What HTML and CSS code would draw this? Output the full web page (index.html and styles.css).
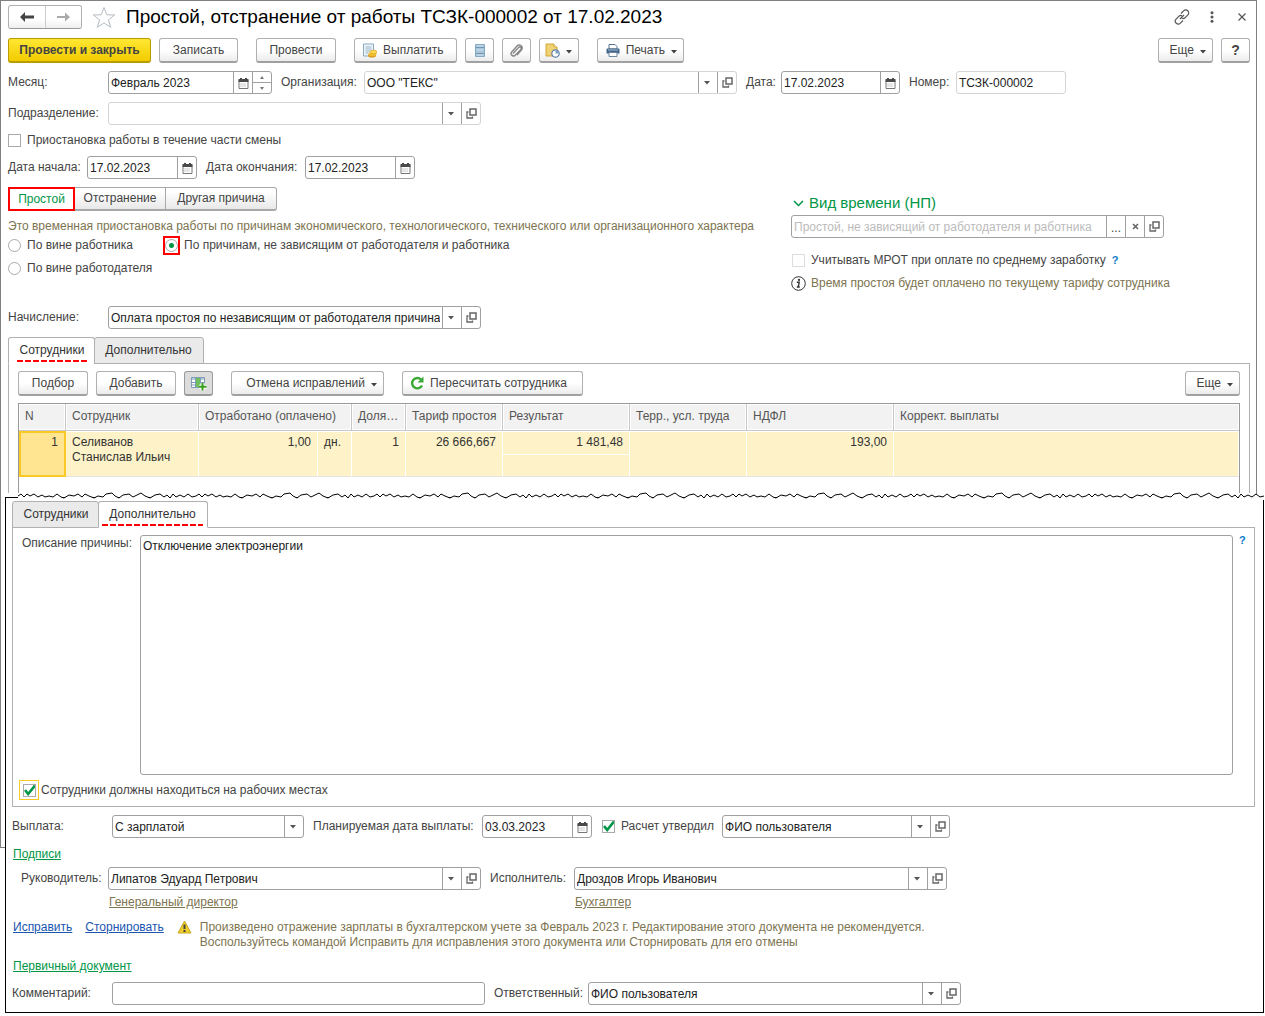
FILE: index.html
```html
<!DOCTYPE html>
<html lang="ru">
<head>
<meta charset="utf-8">
<title>Простой, отстранение от работы</title>
<link rel="stylesheet" href="styles.css">
</head>
<body>
<svg class="sprite" aria-hidden="true">
  <symbol id="calendar" viewBox="0 0 11 12"><path d="M1 3.500h9v8H1z" fill="#fff" stroke="#777"/><path d="M.5 2h10v3H.5zM2 1h2v2H2zM7 1h2v2H7z" fill="#4a4a4a"/><path d="M2.500 7h6M2.500 9h6" stroke="#999" stroke-dasharray="1 1"/></symbol>
  <symbol id="open" viewBox="0 0 11 11"><path d="M4 1h6v6H4z" fill="none" stroke="#666" stroke-width="1.500"/><path d="M2.500 4H1v6h5.500V8.500" fill="none" stroke="#666" stroke-width="1.300"/></symbol>
  <symbol id="caret" viewBox="0 0 6 4"><path d="M0 0h6L3 3.500z" fill="#444"/></symbol>
</svg>

<main class="page">
<section class="window window-main">
  <header class="titlebar">
    <div class="history">
      <button aria-label="Назад"><svg width="16" height="12" viewBox="0 0 16 12"><path d="M1 6l5-5v3.500h9v3H6V11z" fill="#444"/></svg></button>
      <button aria-label="Вперед"><svg width="16" height="12" viewBox="0 0 16 12"><path d="M15 6l-5-4.500V5H2v2h8v3.500z" fill="#aaa"/></svg></button>
    </div>
    <button class="bare star" aria-label="В избранное"><svg width="24" height="23" viewBox="0 0 24 23"><path d="M12 1.500l2.800 7.300 7.900.2-6.300 4.800 2.300 7.500L12 17l-6.700 4.300 2.300-7.500L1.300 9l7.900-.2z" fill="#fff" stroke="#b4bcc4"/></svg></button>
    <h1>Простой, отстранение от работы ТСЗК-000002 от 17.02.2023</h1>
    <div class="window-tools">
      <button class="bare" aria-label="Ссылка"><svg width="16" height="16" viewBox="0 0 16 16" fill="none" stroke="#555" stroke-width="1.200"><path d="M7 4.500l2.600-2.600a2.800 2.800 0 0 1 4.300 4L11 8.800a2.600 2.600 0 0 1-3 .4M9 11.500l-2.600 2.600a2.800 2.800 0 0 1-4.300-4L5 7.200a2.600 2.600 0 0 1 3-.4M6 10l4-4"/></svg></button>
      <button class="bare" aria-label="Меню"><svg width="4" height="12" viewBox="0 0 4 12" fill="#555"><circle cx="2" cy="1.700" r="1.500"/><circle cx="2" cy="6" r="1.500"/><circle cx="2" cy="10.300" r="1.500"/></svg></button>
      <button class="bare close" aria-label="Закрыть"><svg width="8" height="8" viewBox="0 0 8 8"><path d="M.5.500l7 7M7.500.500l-7 7" stroke="#555" stroke-width="1.200"/></svg></button>
    </div>
  </header>

  <div class="toolbar">
    <button class="btn primary">Провести и закрыть</button>
    <button class="btn w79">Записать</button>
    <button class="btn w80 apart">Провести</button>
    <button class="btn w103 apart pictured"><svg width="15" height="15" viewBox="0 0 15 15"><path d="M1.500 1h10v12h-10z" fill="#eef5fa" stroke="#8aa9c0"/><path d="M3.500 4h6M3.500 6h6M3.500 8h5M3.500 10h3" stroke="#9ab5c8"/><ellipse cx="10" cy="12.500" rx="4" ry="2" fill="#d89a20"/><ellipse cx="10.500" cy="11" rx="4" ry="2" fill="#f0c030"/><ellipse cx="11.500" cy="9" rx="3.400" ry="1.900" fill="#ffda50" stroke="#d09a20" stroke-width=".6"/></svg>Выплатить</button>
    <button class="btn icon" aria-label="Реестр"><svg width="10" height="13" viewBox="0 0 10 13"><path d="M.5.500h9v12h-9z" fill="#a9c6dc" stroke="#86a9c4"/><path d="M1 3.500h8M1 9.500h8" stroke="#6f95b4"/><path d="M2 2h6M2 6h6M2 11h6" stroke="#cfe0ec"/></svg></button>
    <button class="btn icon" aria-label="Файлы"><svg width="13" height="13" viewBox="0 0 13 13"><path d="M3 9.500l5.500-6a1.500 1.500 0 0 1 2.300 2L5.500 11a2.400 2.400 0 0 1-3.800-3L7 2a3 3 0 0 1 4.800 3.500L7 11" fill="none" stroke="#888" stroke-width="1.400"/></svg></button>
    <button class="btn menu w40" aria-label="Отчеты"><svg width="15" height="15" viewBox="0 0 15 15"><path d="M1 1h8l3 3v9H1z" fill="#f1d272" stroke="#cfa83c"/><path d="M9 1v3h3" fill="#fff" stroke="#cfa83c"/><circle cx="10.500" cy="10.500" r="3.700" fill="#fff" stroke="#5d7fa8" stroke-width="1.200"/><path d="M10.500 10.500V7.500a3 3 0 0 1 3 3z" fill="#7d9cc4"/></svg><svg class="caret"><use href="#caret"/></svg></button>
    <button class="btn menu w87 apart"><svg width="14" height="13" viewBox="0 0 14 13"><path d="M3 .5h6l2 2V5H3z" fill="#fff" stroke="#56708c"/><path d="M1.500 4.500h11q1 0 1 1v4h-13v-4q0-1 1-1z" fill="#41658a"/><path d="M3 8.500h8v4H3z" fill="#fff" stroke="#6b86a0"/><path d="M2 6h10" stroke="#a9c2d8"/></svg>Печать<svg class="caret"><use href="#caret"/></svg></button>
    <span class="spacer"></span>
    <button class="btn menu w55">Еще<svg class="caret"><use href="#caret"/></svg></button>
    <button class="btn icon help">?</button>
  </div>

  <form class="form">
    <div class="row">
      <label class="lead" for="month">Месяц:</label>
      <div class="field f164"><input id="month" value="Февраль 2023"><button type="button" aria-label="Выбрать месяц"><svg width="11" height="12"><use href="#calendar"/></svg></button><span class="spin"><button type="button" aria-label="Больше"><svg width="4" height="3" viewBox="0 0 4 3"><path d="M2 0l2 3H0z" fill="#777"/></svg></button><button type="button" aria-label="Меньше"><svg width="4" height="3" viewBox="0 0 4 3"><path d="M0 0h4L2 3z" fill="#777"/></svg></button></span></div>
      <label class="l83" for="org">Организация:</label>
      <div class="field soft f373"><select id="org"><option>ООО "ТЕКС"</option></select><button type="button" aria-label="Открыть"><svg width="11" height="11"><use href="#open"/></svg></button></div>
      <label class="l35" for="date">Дата:</label>
      <div class="field f119"><input id="date" value="17.02.2023"><button type="button" aria-label="Выбрать дату"><svg width="11" height="12"><use href="#calendar"/></svg></button></div>
      <label class="l47" for="number">Номер:</label>
      <div class="field soft f110"><input id="number" value="ТСЗК-000002"></div>
    </div>
    <div class="row">
      <label class="lead" for="dept">Подразделение:</label>
      <div class="field soft f373"><select id="dept"><option></option></select><button type="button" aria-label="Открыть"><svg width="11" height="11"><use href="#open"/></svg></button></div>
    </div>
    <label class="check"><input type="checkbox">Приостановка работы в течение части смены</label>
    <div class="row">
      <label class="l79" for="from">Дата начала:</label>
      <div class="field f110"><input id="from" value="17.02.2023"><button type="button" aria-label="Выбрать дату"><svg width="11" height="12"><use href="#calendar"/></svg></button></div>
      <label class="l99" for="to">Дата окончания:</label>
      <div class="field f110"><input id="to" value="17.02.2023"><button type="button" aria-label="Выбрать дату"><svg width="11" height="12"><use href="#calendar"/></svg></button></div>
    </div>

    <div class="columns">
      <div class="reason">
        <div class="segments"><button type="button" class="active">Простой</button><button type="button">Отстранение</button><button type="button">Другая причина</button></div>
        <p class="note">Это временная приостановка работы по причинам экономического, технологического, технического или организационного характера</p>
        <div class="radios">
          <label class="check"><input type="radio" name="fault">По вине работника</label>
          <label class="check"><span class="ring"><input type="radio" name="fault" checked></span>По причинам, не зависящим от работодателя и работника</label>
          <label class="check"><input type="radio" name="fault">По вине работодателя</label>
        </div>
      </div>
      <div class="timekind">
        <h2><svg width="11" height="7" viewBox="0 0 11 7"><path d="M1 1l4.500 4.500L10 1" fill="none" stroke="#009646" stroke-width="1.500"/></svg>Вид времени (НП)</h2>
        <div class="field f373"><input class="muted" aria-label="Вид времени" value="Простой, не зависящий от работодателя и работника"><button type="button" class="dots" aria-label="Выбрать">...</button><button type="button" aria-label="Очистить"><svg width="7" height="7" viewBox="0 0 7 7"><path d="M1 1l5 5M6 1L1 6" stroke="#666" stroke-width="1.600"/></svg></button><button type="button" aria-label="Открыть"><svg width="11" height="11"><use href="#open"/></svg></button></div>
        <div class="row inline"><label class="check"><input type="checkbox" disabled>Учитывать МРОТ при оплате по среднему заработку</label><a class="hint" href="#">?</a></div>
        <p class="note info"><svg width="15" height="15" viewBox="0 0 15 15"><circle cx="7.500" cy="7.500" r="6.800" fill="#fff" stroke="#333"/><path d="M5.800 6.300h2.400l-1 4.700M5.800 11h3" fill="none" stroke="#333" stroke-width="1.400"/><circle cx="8" cy="3.900" r="1.100" fill="#333"/></svg>Время простоя будет оплачено по текущему тарифу сотрудника</p>
      </div>
    </div>

    <div class="row accrual">
      <label class="lead" for="accrual">Начисление:</label>
      <div class="field f373"><select id="accrual"><option>Оплата простоя по независящим от работодателя причинам</option></select><button type="button" aria-label="Открыть"><svg width="11" height="11"><use href="#open"/></svg></button></div>
    </div>
  </form>

  <div class="tabs"><button class="active"><span>Сотрудники</span></button><button><span>Дополнительно</span></button></div>
  <div class="panel staff">
    <div class="toolbar">
      <button class="btn w70">Подбор</button>
      <button class="btn w80">Добавить</button>
      <button class="btn icon pressed" aria-label="Колонки"><svg width="16" height="15" viewBox="0 0 16 15"><path d="M.5 1.500h13v10H.5z" fill="#fff" stroke="#7f9db5"/><path d="M1 2h12v2H1z" fill="#b5cadb"/><path d="M5 2h4v9H5z" fill="#6fbf5a"/><path d="M4.500 2v9M9.500 2v9M1 6.500h4M1 9h4M10 6.500h3" stroke="#7f9db5"/><path d="M11.500 7v7.500M8 10.800h7.500" stroke="#fff" stroke-width="4"/><path d="M11.500 7v7.500M8 10.800h7.500" stroke="#38a01c" stroke-width="2"/></svg></button>
      <button class="btn menu w153 apart">Отмена исправлений<svg class="caret"><use href="#caret"/></svg></button>
      <button class="btn w181 apart pictured"><svg width="14" height="14" viewBox="0 0 14 14"><path d="M12 9.500a5.200 5.200 0 1 1-1-6" fill="none" stroke="#3aa935" stroke-width="2.400"/><path d="M13.500.500v6h-6z" fill="#3aa935"/></svg>Пересчитать сотрудника</button>
      <span class="spacer"></span>
      <button class="btn menu w55">Еще<svg class="caret"><use href="#caret"/></svg></button>
    </div>
    <table>
      <colgroup><col class="c-n"><col class="c-name"><col class="c-worked"><col class="c-unit"><col class="c-share"><col class="c-rate"><col class="c-result"><col class="c-terr"><col class="c-tax"><col></colgroup>
      <thead><tr><th>N</th><th>Сотрудник</th><th colspan="2">Отработано (оплачено)</th><th>Доля…</th><th>Тариф простоя</th><th>Результат</th><th>Терр., усл. труда</th><th>НДФЛ</th><th>Коррект. выплаты</th></tr></thead>
      <tbody>
        <tr><td rowspan="2" class="num current">1</td><td rowspan="2">Селиванов<br>Станислав Ильич</td><td rowspan="2" class="num">1,00</td><td rowspan="2">дн.</td><td rowspan="2" class="num">1</td><td rowspan="2" class="num">26 666,667</td><td class="num split">1 481,48</td><td rowspan="2"></td><td rowspan="2" class="num">193,00</td><td rowspan="2"></td></tr>
        <tr><td></td></tr>
      </tbody>
    </table>
  </div>
</section>

<section class="window-extra">
  <svg class="tear" height="8" aria-hidden="true">
    <defs><pattern id="torn" width="178" height="8" patternUnits="userSpaceOnUse"><path d="M0 4L3 2 6 5 9 2 12 4 16 2 20 5 24 3 27 5 31 4 35 5 39 2 43 5 46 6 51 3 56 4 60 2 64 5 67 2 71 4 76 6 80 4 85 5 88 2 94 1 97 4 101 6 105 3 111 2 115 5 119 3 123 1 127 4 132 6 137 3 142 2 146 5 149 3 152 6 155 2 158 5 162 3 166 5 170 2 174 5 178 4V8H0z" fill="#fff"/><path d="M0 4L3 2 6 5 9 2 12 4 16 2 20 5 24 3 27 5 31 4 35 5 39 2 43 5 46 6 51 3 56 4 60 2 64 5 67 2 71 4 76 6 80 4 85 5 88 2 94 1 97 4 101 6 105 3 111 2 115 5 119 3 123 1 127 4 132 6 137 3 142 2 146 5 149 3 152 6 155 2 158 5 162 3 166 5 170 2 174 5 178 4" fill="none" stroke="#000"/></pattern></defs>
    <rect width="100%" height="8" fill="url(#torn)"/>
  </svg>
  <div class="sheet">
    <div class="tabs"><button><span>Сотрудники</span></button><button class="active"><span>Дополнительно</span></button></div>
    <div class="panel details">
      <div class="describe"><label for="why">Описание причины:</label><textarea id="why">Отключение электроэнергии</textarea><a class="hint" href="#">?</a></div>
      <label class="check present"><span class="focus"><input type="checkbox" checked></span>Сотрудники должны находиться на рабочих местах</label>
    </div>
    <form class="form lower">
      <div class="row">
        <label class="lead" for="pay">Выплата:</label>
        <div class="field f192"><select id="pay"><option>С зарплатой</option></select></div>
        <label class="l169" for="paydate">Планируемая дата выплаты:</label>
        <div class="field f110"><input id="paydate" value="03.03.2023"><button type="button" aria-label="Выбрать дату"><svg width="11" height="12"><use href="#calendar"/></svg></button></div>
        <label class="check approved"><input type="checkbox" checked>Расчет утвердил</label>
        <div class="field f228"><select aria-label="Расчет утвердил"><option>ФИО пользователя</option></select><button type="button" aria-label="Открыть"><svg width="11" height="11"><use href="#open"/></svg></button></div>
      </div>
      <div class="linkline"><a class="green" href="#">Подписи</a></div>
      <div class="signers">
        <label for="head">Руководитель:</label>
        <div class="field"><select id="head"><option>Липатов Эдуард Петрович</option></select><button type="button" aria-label="Открыть"><svg width="11" height="11"><use href="#open"/></svg></button></div>
        <label for="clerk">Исполнитель:</label>
        <div class="field"><select id="clerk"><option>Дроздов Игорь Иванович</option></select><button type="button" aria-label="Открыть"><svg width="11" height="11"><use href="#open"/></svg></button></div>
        <a class="olive post-head" href="#">Генеральный директор</a>
        <a class="olive post-clerk" href="#">Бухгалтер</a>
      </div>
      <div class="warning">
        <a href="#">Исправить</a><a href="#">Сторнировать</a>
        <svg width="15" height="14" viewBox="0 0 15 14"><path d="M7.500 1L14 13H1z" fill="#efcf2c" stroke="#c9a820" stroke-linejoin="round"/><path d="M7.500 4.500V9M7.500 10v2" stroke="#444" stroke-width="2"/></svg>
        <p class="note">Произведено отражение зарплаты в бухгалтерском учете за Февраль 2023 г. Редактирование этого документа не рекомендуется.<br>Воспользуйтесь командой Исправить для исправления этого документа или Сторнировать для его отмены</p>
      </div>
      <div class="linkline"><a class="green" href="#">Первичный документ</a></div>
      <div class="row">
        <label class="lead" for="comment">Комментарий:</label>
        <div class="field f373"><input id="comment"></div>
        <label class="l93" for="owner">Ответственный:</label>
        <div class="field f373"><select id="owner"><option>ФИО пользователя</option></select><button type="button" aria-label="Открыть"><svg width="11" height="11"><use href="#open"/></svg></button></div>
      </div>
    </form>
  </div>
</section>
</main>
</body>
</html>
```
FILE: styles.css
```css
* { box-sizing: border-box; }

body {
  margin: 0;
  background: #fff;
  color: #444;
  font: 12px/15px "Liberation Sans", Arial, sans-serif;
}

button, input, select, textarea { font: inherit; color: inherit; margin: 0; }
button { padding: 0; cursor: pointer; }
h1, h2, p { margin: 0; font-weight: normal; }
svg { flex: none; display: block; }
label { white-space: nowrap; }
.sprite { position: absolute; width: 0; height: 0; }

/* Main document window; the lower sheet covers its bottom part */
.window-main {
  margin-right: 8px;
  padding: 4px 6px 354px 7px;
  border: 1px solid #808080;
}

.titlebar { display: flex; align-items: center; height: 24px; }
.history { display: flex; width: 74px; height: 24px; border: 1px solid #b0b0b0; border-bottom-color: #999; border-radius: 3px; }
.history button { flex: 1; display: grid; place-items: center; border: 0; background: linear-gradient(#fff 60%, #eee); border-radius: 3px; }
.history button + button { border-left: 1px solid #ccc; border-radius: 0 3px 3px 0; }
.bare { border: 0; background: none; }
.star { margin: 0 10px; }
h1 { color: #000; font-size: 19px; line-height: 24px; white-space: nowrap; }
.window-tools { display: flex; align-items: center; gap: 20px; margin-left: auto; padding-right: 4px; }
.close { margin-left: 4px; }

.toolbar { display: flex; gap: 8px; }
.titlebar + .toolbar { margin-top: 9px; }
.spacer { flex: 1; }
.btn {
  display: flex; align-items: center; justify-content: center; gap: 6px;
  height: 25px;
  border: 1px solid #b0b0b0; border-bottom: 2px solid #a0a0a0; border-radius: 3px;
  background: linear-gradient(#fff 50%, #ececec);
  white-space: nowrap;
}
.pictured { justify-content: flex-start; padding-left: 7px; }
.menu { justify-content: flex-end; padding-right: 6px; }
.primary { width: 143px; border-color: #b89c00; background: linear-gradient(#ffe733, #f2cc00); font-weight: bold; }
.icon { width: 29px; }
.help { font-weight: bold; font-size: 14px; }
.pressed { background: #dcdcdc; border-color: #999; }
.apart { margin-left: 10px; }
.caret { width: 6px; height: 4px; margin-top: 3px; }
.w40 { width: 40px; } .w55 { width: 55px; } .w70 { width: 70px; } .w79 { width: 79px; }
.w80 { width: 80px; } .w87 { width: 87px; } .w103 { width: 103px; } .w153 { width: 153px; } .w181 { width: 181px; }

.form { display: flex; flex-direction: column; gap: 8px; margin-top: 8px; }
.row { display: flex; align-items: center; }
.lead { width: 100px; }
.l35, .l47, .l79, .l83, .l93, .l99, .l169 { margin-left: 9px; }
.l35 { width: 35px; } .l47 { width: 47px; } .l83 { width: 83px; }
.l79 { width: 79px; margin-left: 0; } .l93 { width: 94px; } .l99 { width: 99px; } .l169 { width: 169px; }

.field {
  display: flex; height: 23px; overflow: hidden;
  border: 1px solid #a0a0a0; border-radius: 3px;
  background: #fff;
}
.soft { border-color: #d4d4d4; }
.field input, .field select { flex: 1; min-width: 0; width: 0; border: 0; outline: 0; padding: 1px 2px 0; background: none; color: #222; }
.field .muted { color: #bbb; }
.field select {
  appearance: none;
  padding-right: 21px;
  background:
    url("data:image/svg+xml,%3Csvg xmlns='http://www.w3.org/2000/svg' width='6' height='4'%3E%3Cpath d='M0 0h6L3 3.500z' fill='%23555'/%3E%3C/svg%3E") no-repeat right 7px center,
    linear-gradient(#a0a0a0, #a0a0a0) no-repeat right 18px top / 1px 100%;
}
.field > button { width: 19px; display: grid; place-items: center; border: 0; border-left: 1px solid #a0a0a0; background: none; }
.field .dots { padding-top: 3px; }
.spin { display: flex; flex-direction: column; width: 19px; border-left: 1px solid #a0a0a0; }
.spin button { flex: 1; display: grid; place-items: center; border: 0; background: none; }
.spin button + button { border-top: 1px solid #a0a0a0; }
.f110 { width: 110px; } .f119 { width: 119px; } .f164 { width: 164px; }
.f192 { width: 192px; } .f228 { width: 228px; } .f373 { width: 373px; }

.check { display: flex; align-items: center; gap: 6px; height: 15px; }
.check input { appearance: none; flex: none; width: 13px; height: 13px; border: 1px solid #aaa; background: #fff; }
.check input[type="radio"] { display: block; border-radius: 50%; }
.check input[type="radio"]:checked { background: radial-gradient(circle, #009646 2px, #fff 3px); }
.check input:disabled { border-color: #ddd; }
.check input[type="checkbox"]:checked {
  background: url("data:image/svg+xml,%3Csvg xmlns='http://www.w3.org/2000/svg' width='12' height='11'%3E%3Cpath d='M1.500 5l3 4L11 .5' fill='none' stroke='%23009646' stroke-width='2.500'/%3E%3C/svg%3E") no-repeat center;
}
.ring { flex: none; margin: -2px -2px -2px -3px; padding: 1px 0; border: 2px solid #f00; }

.columns { display: grid; grid-template-columns: 783px 1fr; }
.segments { display: flex; height: 24px; width: 269px; }
.segments button { flex: none; width: 91px; border: 1px solid #a8a8a8; border-left: 0; border-bottom-width: 2px; background: linear-gradient(#fff 20%, #e8e8e8); white-space: nowrap; }
.segments .active { width: 67px; border: 2px solid #f00; background: #fff; color: #009646; }
.segments button:last-child { width: 111px; border-radius: 0 3px 3px 0; }
.note { color: #7d7450; white-space: nowrap; }
.segments + .note { margin-top: 8px; }
.radios { display: grid; grid-template-columns: 158px 1fr; gap: 8px 0; margin-top: 4px; }

h2 { display: flex; align-items: center; gap: 5px; height: 28px; padding: 4px 0 0 2px; color: #009646; font-size: 15px; line-height: 20px; }
.inline { margin: 15px 0 8px; gap: 6px; }
.inline .check { padding-left: 1px; }
.hint { color: #0a7ac8; font-size: 11px; font-weight: bold; text-decoration: none; }
.info { display: flex; align-items: center; gap: 5px; }
.accrual { margin-top: 7px; }

.tabs { position: relative; z-index: 1; display: flex; height: 27px; margin-top: 8px; }
.tabs button { width: 87px; padding: 0; border: 1px solid #b0b0b0; border-radius: 3px 3px 0 0; background: #eaeaea; color: #333; white-space: nowrap; }
.tabs button + button { width: 110px; margin-left: -1px; }
.tabs .active { background: #fff; border-bottom-color: #fff; }
.tabs span { display: block; height: 23px; padding-top: 4px; margin: 0 4px 0 3px; }
.tabs button:first-child span { margin: 0 7px 0 8px; }
.tabs .active span { background: repeating-linear-gradient(90deg, #f00 0 6px, transparent 6px 8px) no-repeat bottom / 100% 2px; }
.panel { border: 1px solid #b0b0b0; margin-top: -1px; }
.staff { padding: 7px 9px 0; border-bottom: 0; }

table { width: 100%; margin-top: 7px; border: 1px solid #999; border-bottom: 0; border-spacing: 0; table-layout: fixed; }
th, td { padding: 4px 6px; text-align: left; vertical-align: top; white-space: nowrap; overflow: hidden; border-right: 1px solid #fff; color: #333; }
th { height: 27px; padding-top: 5px; background: #f2f2f2; border-right-color: #c8c8c8; border-bottom: 1px solid #c8c8cc; box-shadow: inset 0 0 0 1px #fff; color: #555; font-weight: normal; }
td { height: 23px; padding-top: 3px; background: #fdf2c8; border-top: 1px solid #fff; border-bottom: 1px solid #e4e4e4; }
.split { border-bottom: 0; }
th:last-child { border-right: 0; }
.num { text-align: right; }
.current { background: #ffe591; border: 2px solid #fbc926; padding-top: 2px; }
.c-n { width: 47px; } .c-name { width: 133px; } .c-worked { width: 119px; } .c-unit { width: 34px; } .c-share { width: 54px; }
.c-rate { width: 97px; } .c-result { width: 127px; } .c-terr { width: 117px; } .c-tax { width: 147px; }
tbody::after { content: ""; display: block; height: 16px; }

/* Lower sheet with the torn upper edge */
.window-extra { position: relative; margin: -356px 1px 0 5px; }
.tear { position: relative; width: calc(100% - 13px); margin-left: 13px; }
.sheet { margin-top: -3px; padding: 3px 8px 7px 6px; border: 1px solid #000; background: #fff; }
.sheet .tabs { margin-top: 0; }
.details { padding: 7px 6px 6px; }
.describe { display: flex; align-items: flex-start; }
.describe label { width: 121px; padding: 1px 0 0 3px; }
.describe textarea { flex: 1; height: 240px; padding: 3px 2px; border: 1px solid #a0a0a0; border-radius: 3px; resize: none; outline: 0; color: #222; }
.describe .hint { width: 15px; padding-left: 6px; line-height: 10px; }
.present { gap: 2px; height: 20px; margin-top: 5px; }
.focus { display: grid; place-items: center; width: 20px; height: 20px; border: 1px solid #fbc926; }
.approved { margin: 0 8px 0 10px; }
a { color: #1a55b0; }
.green { color: #009646; }
.olive { color: #7d7450; }
.linkline { padding: 1px 0 0 1px; height: 16px; }
.signers { display: grid; grid-template-columns: 87px 373px 93px 373px; align-items: center; gap: 5px 0; padding-left: 9px; margin-top: -3px; }
.signers label + .field + label { padding-left: 9px; }
.post-head { grid-column: 2; padding-left: 1px; }
.post-clerk { grid-column: 4; padding-left: 1px; }
.warning { display: flex; align-items: flex-start; gap: 13px; margin-top: 2px; padding-left: 1px; }
.warning .note { margin-left: -5px; }
```
